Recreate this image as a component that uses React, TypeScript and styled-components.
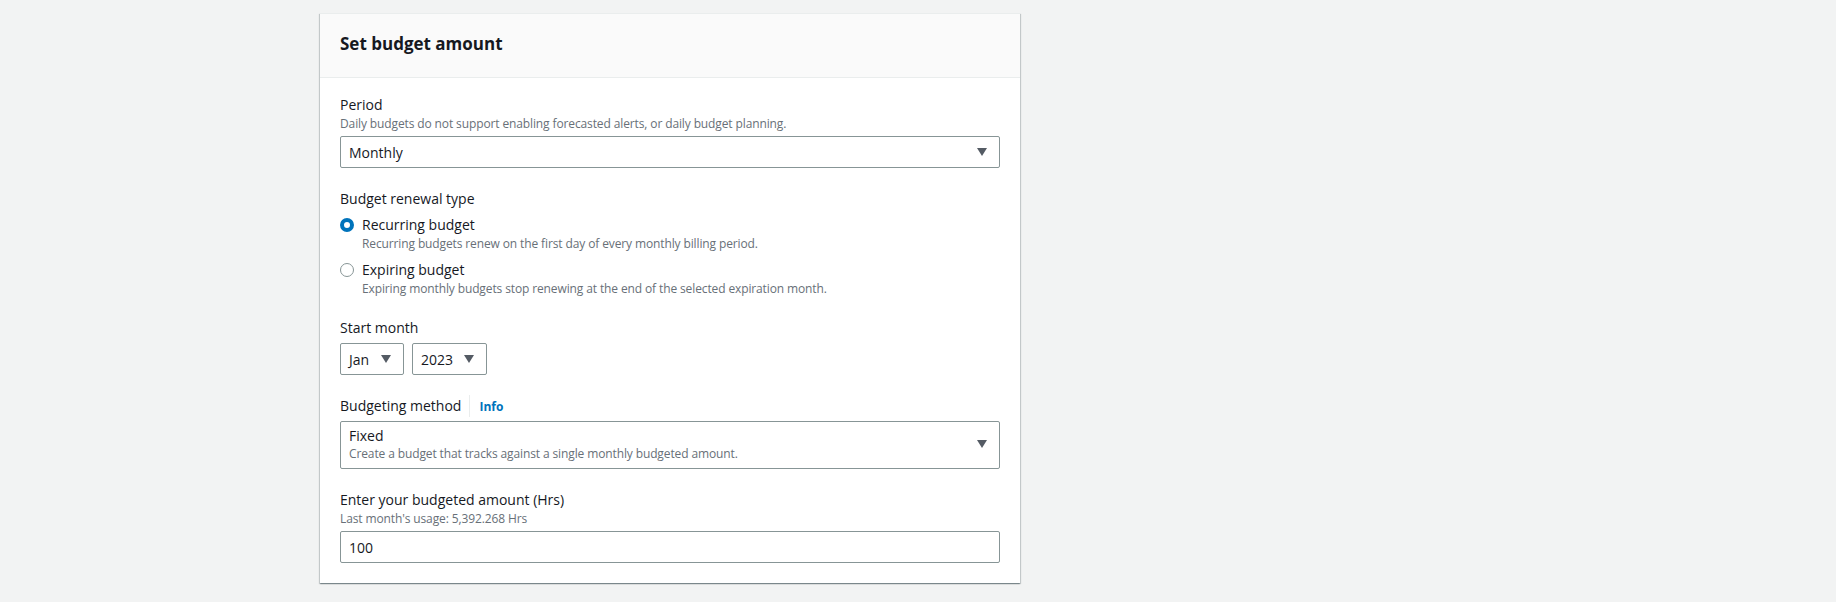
import React, { useState } from "react";
import styled, { createGlobalStyle } from "styled-components";

const GlobalStyle = createGlobalStyle`
  * { box-sizing: border-box; }
  body {
    margin: 0;
    background: #f2f3f3;
    font-family: "Open Sans", "Noto Sans", Arial, sans-serif;
    color: #16191f;
  }
`;

const Page = styled.div`
  padding: 13px 0 18px 320px;
`;

const Card = styled.section`
  width: 700px;
  background: #ffffff;
  border-top: 1px solid #eaeded;
  box-shadow: 0 1px 1px 0 rgba(0, 28, 36, 0.3), 1px 1px 1px 0 rgba(0, 28, 36, 0.15),
    -1px 1px 1px 0 rgba(0, 28, 36, 0.15);
`;

const CardHeader = styled.header`
  height: 64px;
  display: flex;
  align-items: flex-start;
  padding: 19px 20px 0;
  background: #fafafa;
  border-bottom: 1px solid #eaeded;
`;

const Title = styled.h2`
  margin: 0;
  font-size: 17px;
  font-weight: 700;
  line-height: 22px;
`;

const CardBody = styled.div`
  display: flex;
  flex-direction: column;
  gap: 20px;
  padding: 16px 20px 20px;
`;

const Field = styled.div`
  display: flex;
  flex-direction: column;
`;

const LabelRow = styled.div`
  display: flex;
  align-items: center;
`;

const Label = styled.label`
  font-size: 14px;
  line-height: 22px;
`;

const Divider = styled.span`
  width: 1px;
  height: 22px;
  background: #eaeded;
  margin: 0 9px 0 8px;
`;

const InfoLink = styled.a`
  font-size: 12px;
  font-weight: 700;
  color: #0073bb;
  text-decoration: none;
  cursor: pointer;
`;

const Description = styled.div<{ $gap?: number }>`
  margin-top: ${p => p.$gap ?? 0}px;
  font-size: 12px;
  line-height: 16px;
  letter-spacing: -0.12px;
  color: #687078;
`;

const Control = styled.div<{ $tall?: boolean; $width?: number }>`
  margin-top: 4px;
  width: ${p => (p.$width ? `${p.$width}px` : "100%")};
  height: ${p => (p.$tall ? "48px" : "32px")};
  display: flex;
  align-items: center;
  justify-content: space-between;
  padding: ${p => (p.$tall ? "4px 12px 6px 8px" : "0 12px 0 8px")};
  border: 1px solid #879596;
  border-radius: 2px;
  background: #ffffff;
  font-size: 14px;
  cursor: pointer;
`;

const ControlText = styled.div`
  display: flex;
  flex-direction: column;
  line-height: 20px;
`;

const Row = styled.div`
  display: flex;
  gap: 8px;
`;

const AmountInput = styled.input`
  margin-top: 4px;
  width: 100%;
  height: 32px;
  padding: 0 8px;
  border: 1px solid #879596;
  border-radius: 2px;
  font: inherit;
  font-size: 14px;
  color: #16191f;
  outline: none;
`;

const RadioGroup = styled.div`
  display: flex;
  flex-direction: column;
  gap: 8px;
  margin-top: 5px;
`;

const RadioItem = styled.div`
  display: grid;
  grid-template-columns: 14px 1fr;
  column-gap: 8px;
  cursor: pointer;
`;

const RadioDot = styled.span<{ $checked: boolean }>`
  width: 14px;
  height: 14px;
  margin-top: 3px;
  border-radius: 50%;
  background: #ffffff;
  border: ${p => (p.$checked ? "4px solid #0073bb" : "1.5px solid #879596")};
`;

const RadioLabel = styled.div`
  font-size: 14px;
  line-height: 20px;
`;

const Caret = () => (
  <svg width="10" height="8" viewBox="0 0 10 8">
    <polygon points="0,0 10,0 5,8" fill="#545b64" />
  </svg>
);

const renewalOptions = [
  {
    id: "recurring",
    label: "Recurring budget",
    desc: "Recurring budgets renew on the first day of every monthly billing period.",
  },
  {
    id: "expiring",
    label: "Expiring budget",
    desc: "Expiring monthly budgets stop renewing at the end of the selected expiration month.",
  },
];

function App() {
  const [renewal, setRenewal] = useState("recurring");
  const [amount, setAmount] = useState("100");

  return (
    <>
      <GlobalStyle />
      <Page>
        <Card>
          <CardHeader>
            <Title>Set budget amount</Title>
          </CardHeader>
          <CardBody>
            <Field>
              <Label>Period</Label>
              <Description>
                Daily budgets do not support enabling forecasted alerts, or daily budget planning.
              </Description>
              <Control>
                <span>Monthly</span>
                <Caret />
              </Control>
            </Field>

            <Field>
              <Label>Budget renewal type</Label>
              <RadioGroup>
                {renewalOptions.map(o => (
                  <RadioItem key={o.id} onClick={() => setRenewal(o.id)}>
                    <RadioDot $checked={renewal === o.id} />
                    <RadioLabel>{o.label}</RadioLabel>
                    <span />
                    <Description $gap={1}>{o.desc}</Description>
                  </RadioItem>
                ))}
              </RadioGroup>
            </Field>

            <Field>
              <Label>Start month</Label>
              <Row>
                <Control $width={64}>
                  <span>Jan</span>
                  <Caret />
                </Control>
                <Control $width={75}>
                  <span>2023</span>
                  <Caret />
                </Control>
              </Row>
            </Field>

            <Field>
              <LabelRow>
                <Label>Budgeting method</Label>
                <Divider />
                <InfoLink>Info</InfoLink>
              </LabelRow>
              <Control $tall>
                <ControlText>
                  <span>Fixed</span>
                  <Description>
                    Create a budget that tracks against a single monthly budgeted amount.
                  </Description>
                </ControlText>
                <Caret />
              </Control>
            </Field>

            <Field>
              <Label>Enter your budgeted amount (Hrs)</Label>
              <Description>Last month's usage: 5,392.268 Hrs</Description>
              <AmountInput value={amount} onChange={e => setAmount(e.target.value)} />
            </Field>
          </CardBody>
        </Card>
      </Page>
    </>
  );
}

export default App;
